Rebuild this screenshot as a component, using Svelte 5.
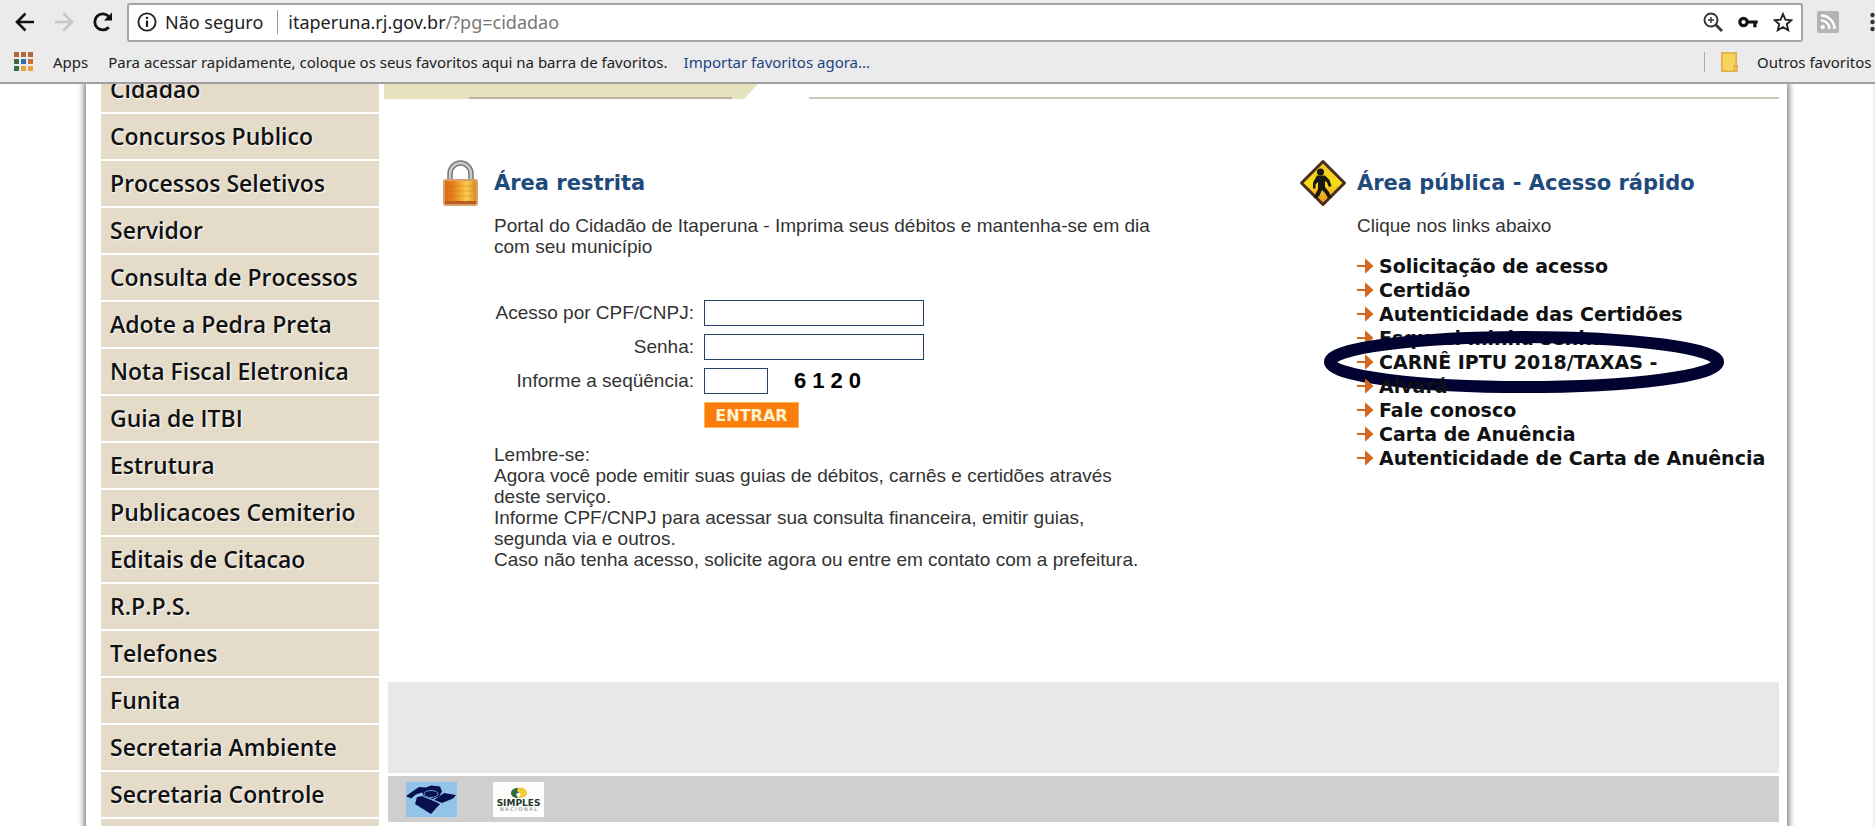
<script>
  // Menu lateral do portal
  const menuItems = [
    'Cidadao',
    'Concursos Publico',
    'Processos Seletivos',
    'Servidor',
    'Consulta de Processos',
    'Adote a Pedra Preta',
    'Nota Fiscal Eletronica',
    'Guia de ITBI',
    'Estrutura',
    'Publicacoes Cemiterio',
    'Editais de Citacao',
    'R.P.P.S.',
    'Telefones',
    'Funita',
    'Secretaria Ambiente',
    'Secretaria Controle',
  ];

  const quickLinks = [
    { label: 'Solicitação de acesso' },
    { label: 'Certidão' },
    { label: 'Autenticidade das Certidões' },
    { label: 'Esqueci minha senha' },
    { label: 'CARNÊ IPTU 2018/TAXAS -', marked: true },
    { label: 'Alvará' },
    { label: 'Fale conosco' },
    { label: 'Carta de Anuência' },
    { label: 'Autenticidade de Carta de Anuência' },
  ];

  // Cores da grelha do ícone "Apps"
  const appDots = [
    '#b5653a', '#b5653a', '#b5653a',
    '#3d6b45', '#2f6fb5', '#c9733a',
    '#3d6b45', '#e5a33c', '#e5a33c',
  ];

  let url = $state('itaperuna.rj.gov.br/?pg=cidadao');
  let cpf = $state('');
  let senha = $state('');
  let sequencia = $state('');
</script>

<div class="window">
  <header class="chrome">
    <div class="toolbar">
      <button class="nav-btn" aria-label="Voltar">
        <svg width="20" height="20" viewBox="0 0 20 20" fill="none" stroke="#111" stroke-width="2.6"><path d="M19 10H3M10.5 1.500L2 10l8.500 8.500" /></svg>
      </button>
      <button class="nav-btn" aria-label="Avançar">
        <svg width="20" height="20" viewBox="0 0 20 20" fill="none" stroke="#c6c6c6" stroke-width="2.6"><path d="M1 10h16M9.500 1.500L18 10l-8.500 8.500" /></svg>
      </button>
      <button class="nav-btn" aria-label="Recarregar">
        <svg width="20" height="20" viewBox="0 0 20 20"><path d="M15.800 15.200A8 8 0 1 1 15.500 4.300" fill="none" stroke="#111" stroke-width="2.8" /><path d="M19 .5v8h-8z" fill="#111" /></svg>
      </button>

      <div class="address">
        <svg width="20" height="20" viewBox="0 0 20 20"><circle cx="10" cy="10" r="8.600" fill="none" stroke="#222" stroke-width="1.9" /><path d="M10 8.600V15M10 4.800v2.200" stroke="#222" stroke-width="2.2" /></svg>
        <span class="insecure">Não seguro</span>
        <span class="url">
          <span class="host" aria-hidden="true">itaperuna.rj.gov.br</span><span class="path" aria-hidden="true">/?pg=cidadao</span>
          <input class="url-input" aria-label="Endereço" bind:value={url} />
        </span>
        <span class="address-icons">
          <button class="icon-btn" aria-label="Zoom">
            <svg width="20" height="20" viewBox="0 0 20 20" fill="none" stroke="#333" stroke-width="1.9"><circle cx="8" cy="8" r="6.500" /><path d="M5 8h6M8 5v6" stroke-width="1.4" /><path d="M12.800 12.800L19 19" stroke-width="2.8" /></svg>
          </button>
          <button class="icon-btn" aria-label="Senhas">
            <svg width="20" height="20" viewBox="0 0 20 20"><circle cx="5.500" cy="10" r="3.700" fill="none" stroke="#111" stroke-width="3.2" /><path d="M9.500 8.400h10.200v3.200h-1.200v3.700h-3.200v-3.700H9.500z" fill="#111" /></svg>
          </button>
          <button class="icon-btn" aria-label="Favorito">
            <svg width="20" height="20" viewBox="0 0 20 20" fill="none" stroke="#222" stroke-width="1.9"><path d="M10 2l2.400 5.700 6 .5-4.600 4 1.400 6L10 15l-5.200 3.200 1.400-6-4.600-4 6-.5z" /></svg>
          </button>
        </span>
      </div>

      <button class="icon-btn feed" aria-label="Feed RSS">
        <svg width="22" height="22" viewBox="0 0 22 22"><rect width="22" height="22" rx="2" fill="#b4b4b4" /><circle cx="5.800" cy="16.200" r="2.100" fill="#fff" /><path d="M4 9.500a8.500 8.500 0 0 1 8.500 8.500M4 4.500A13.500 13.500 0 0 1 17.500 18" fill="none" stroke="#fff" stroke-width="2.5" /></svg>
      </button>
      <button class="icon-btn more" aria-label="Menu">
        <svg width="5" height="20" viewBox="0 0 5 20" fill="#333"><circle cx="2.500" cy="3" r="2.200" /><circle cx="2.500" cy="10" r="2.200" /><circle cx="2.500" cy="17" r="2.200" /></svg>
      </button>
    </div>

    <nav class="bookmarks" aria-label="Barra de favoritos">
      <a class="apps" href="#apps">
        <span class="apps-grid" aria-hidden="true">
          {#each appDots as color}
            <i style="background: {color}"></i>
          {/each}
        </span>
        Apps
      </a>
      <span class="hint">Para acessar rapidamente, coloque os seus favoritos aqui na barra de favoritos.</span>
      <a class="import" href="#importar">Importar favoritos agora...</a>
      <a class="others" href="#outros">
        <svg width="17" height="20" viewBox="0 0 17 20"><path d="M.8.800h14.400v13h1v5.400H.8z" fill="#f7d35c" stroke="#e0a03c" stroke-width="1.3" /><path d="M13.500 19v-5h2.500" fill="none" stroke="#e0a03c" stroke-width="1.3" /></svg>
        Outros favoritos
      </a>
    </nav>
  </header>

  <div class="viewport">
    <div class="sheet">
      <ul class="menu">
        {#each menuItems as item}
          <li><a href="#menu">{item}</a></li>
        {/each}
        <li class="menu-end"></li>
      </ul>

      <main class="main">
        <div class="tabs">
          <div class="tab"></div>
          <div class="tab-rule"></div>
        </div>

        <div class="areas">
          <section class="area">
            <svg class="lock" width="37" height="48" viewBox="0 0 37 48">
              <defs>
                <linearGradient id="gold" x1="0" x2="1">
                  <stop offset="0" stop-color="#d8701c" />
                  <stop offset=".25" stop-color="#e87d17" />
                  <stop offset=".7" stop-color="#f8cf4c" />
                  <stop offset="1" stop-color="#d98a2a" />
                </linearGradient>
              </defs>
              <path d="M8 23V15a10.500 11 0 0 1 21 0v8" fill="none" stroke="#777" stroke-width="5.5" />
              <path d="M8 23V15a10.500 11 0 0 1 21 0v8" fill="none" stroke="#c9c9c9" stroke-width="2.5" />
              <rect x="1" y="20" width="35" height="27" rx="3" fill="#d9a06a" />
              <rect x="3" y="22" width="31" height="23" rx="1" fill="url(#gold)" />
              <path d="M4 27h29M4 32h29M4 37h29" stroke="#d96a12" stroke-width="1" opacity=".35" />
              <path d="M3 43.500h31" stroke="#b85a24" stroke-width="3" />
            </svg>
            <div class="area-body">
              <h2>Área restrita</h2>
              <p class="intro">Portal do Cidadão de Itaperuna - Imprima seus débitos e mantenha-se em dia com seu município</p>

              <form class="login" onsubmit={(e) => e.preventDefault()}>
                <label for="cpf">Acesso por CPF/CNPJ:</label>
                <input id="cpf" type="text" bind:value={cpf} />

                <label for="senha">Senha:</label>
                <input id="senha" type="password" bind:value={senha} />

                <label for="sequencia">Informe a seqüência:</label>
                <div class="captcha">
                  <input id="sequencia" class="short" type="text" bind:value={sequencia} />
                  <span class="digits"><b>6</b><b>1</b><b>2</b><b>0</b></span>
                </div>

                <button class="enter" type="submit">ENTRAR</button>
              </form>

              <p class="reminder">
                Lembre-se:<br />
                Agora você pode emitir suas guias de débitos, carnês e certidões através deste serviço.<br />
                Informe CPF/CNPJ para acessar sua consulta financeira, emitir guias, segunda via e outros.<br />
                Caso não tenha acesso, solicite agora ou entre em contato com a prefeitura.
              </p>
            </div>
          </section>

          <section class="area">
            <svg class="sign" width="48" height="48" viewBox="0 0 48 48">
              <defs>
                <linearGradient id="sign" x1="0" y1="0" x2="0" y2="1">
                  <stop offset="0" stop-color="#f0c22a" />
                  <stop offset=".5" stop-color="#f6df1a" />
                  <stop offset="1" stop-color="#ee8f22" />
                </linearGradient>
              </defs>
              <path d="M24 2.500L45.500 24 24 45.500 2.500 24z" fill="url(#sign)" stroke="#4a2d20" stroke-width="3" stroke-linejoin="round" />
              <circle cx="21.500" cy="13" r="3.500" fill="#1b1712" />
              <path d="M18 16.500h8l4.500 4.500 2 6-2.500 1-2-4.500-2-1.500v6l4 5 3 6h-4l-3-5-3-3-2.500 5.500-2.500 2.500h-3.500l4.500-9V23l-2.500 2.500v4h-2.500v-6z" fill="#1b1712" />
            </svg>
            <div class="area-body">
              <h2>Área pública - Acesso rápido</h2>
              <p class="intro">Clique nos links abaixo</p>
              <ul class="links">
                {#each quickLinks as link}
                  <li>
                    <svg width="17" height="16" viewBox="0 0 17 16"><path d="M0 7h8V.5l2 1.500 6.500 6L10 14l-2 1.500V9H0z" fill="#d2691e" /></svg>
                    <a href="#acesso">{link.label}</a>
                    {#if link.marked}
                      <svg class="marker" width="400" height="62" viewBox="0 0 400 62" aria-hidden="true"><ellipse cx="200" cy="31" rx="194" ry="25" fill="none" stroke="#020230" stroke-width="12" /></svg>
                    {/if}
                  </li>
                {/each}
              </ul>
            </div>
          </section>
        </div>

        <div class="banner"></div>
        <footer class="partners">
          <a href="#receita" aria-label="Receita Federal">
            <svg width="51" height="35" viewBox="0 0 51 35">
              <rect width="51" height="35" fill="#93c3e8" />
              <path d="M0 14L13 5l7 .5 5-2 9 1 2 5-3 5-6 2.500-9-2.500-2-4-6 2-5 4z" fill="#06104f" />
              <path d="M28 18l10-7 12 2-3 3.500L36 21z" fill="#06104f" />
              <path d="M11 15l6-1 17 8-9 10L9 22z" fill="#06104f" />
              <ellipse cx="25" cy="12" rx="7" ry="3.500" fill="#06104f" stroke="#6f9ccc" />
              <path d="M17 14.500l14 5" stroke="#6f9ccc" />
            </svg>
          </a>
          <a href="#simples" aria-label="Simples Nacional">
            <svg width="51" height="35" viewBox="0 0 51 35">
              <rect width="51" height="35" fill="#fdfdfb" />
              <path d="M25 6c-4 0-7 2-7 5s3 5 7 5l-2-4 4-2z" fill="#2f6a3e" />
              <path d="M25 6c5-1 9 1 9 5s-4 5-9 5l3-4-4-3z" fill="#f0cb3a" />
              <text x="25.500" y="24" text-anchor="middle" font-family="DejaVu Sans" font-weight="bold" font-size="9" fill="#1d3a30">SIMPLES</text>
              <text x="25.500" y="29" text-anchor="middle" font-family="DejaVu Sans" font-size="5" fill="#777">N A C I O N A L</text>
            </svg>
          </a>
        </footer>
      </main>
    </div>
  </div>
</div>

<style>
  :global(body) {
    margin: 0;
    background: #fff;
  }

  .window {
    display: flex;
    flex-direction: column;
    height: 100vh;
    overflow: hidden;
    color: #333;
    font-family: "Liberation Sans", Arial, sans-serif;
    font-size: 19px;
  }

  a {
    color: inherit;
    text-decoration: none;
  }

  button {
    padding: 0;
    border: 0;
    background: none;
    cursor: pointer;
  }

  svg {
    display: block;
    flex-shrink: 0;
  }

  /* Barra do navegador */
  .chrome {
    flex-shrink: 0;
    background: #ebebeb;
    border-bottom: 2px solid #a0a0a0;
    color: #222;
    font-family: "Noto Sans", "Segoe UI", sans-serif;
    overflow: hidden;
  }

  .toolbar {
    display: flex;
    align-items: center;
    height: 38px;
    padding: 3px 0 0 15px;
  }

  .nav-btn {
    width: 20px;
    margin-right: 19px;
  }

  .nav-btn:nth-child(3) {
    margin-right: 14px;
  }

  .address {
    display: flex;
    flex: 1;
    align-items: center;
    box-sizing: border-box;
    height: 39px;
    padding: 0 8px;
    background: #fff;
    border: 2px solid #a3a3a3;
    border-radius: 3px;
    font-size: 18px;
  }

  .insecure {
    margin-left: 8px;
    padding-right: 14px;
    border-right: 1px solid #999;
    white-space: nowrap;
  }

  .url {
    position: relative;
    flex: 1;
    margin-left: 10px;
    white-space: nowrap;
  }

  .path { color: #777; }

  /* O texto visível é colorido por partes; o campo fica por cima */
  .url-input {
    position: absolute;
    inset: 0;
    width: 100%;
    padding: 0;
    border: 0;
    background: none;
    color: transparent;
    font: inherit;
  }

  .address-icons {
    display: flex;
    gap: 15px;
  }

  .feed { margin-left: 14px; }

  .more {
    margin-left: 31px;
    width: 5px;
  }

  .bookmarks {
    display: flex;
    align-items: center;
    height: 41px;
    padding-left: 14px;
    font-size: 15px;
    white-space: nowrap;
  }

  .apps {
    display: flex;
    align-items: center;
    gap: 20px;
    margin-right: 20px;
  }

  .apps-grid {
    display: grid;
    grid-template-columns: repeat(3, 5px);
    grid-auto-rows: 5px;
    gap: 2px;
  }

  .import {
    margin-left: 16px;
    color: #1b4382;
  }

  .others {
    display: flex;
    align-items: center;
    gap: 19px;
    width: 154px;
    margin-left: auto;
    padding-left: 16px;
    border-left: 1px solid #aaa;
  }

  /* Página */
  .viewport {
    flex: 1;
    min-height: 0;
    overflow: hidden;
    border-right: 2px solid #eee;
  }

  .sheet {
    display: flex;
    gap: 5px;
    margin: 0 86px;
    padding: 0 8px 0 15px;
    background: #fff;
    box-shadow: 0 0 6px 2px #777;
  }

  /* A página está rolada, o primeiro item fica cortado */
  .menu {
    flex: 0 0 278px;
    margin: -17px 0 0;
    padding: 0;
    list-style: none;
    font-family: "Trebuchet MS", "Open Sans", sans-serif;
    font-size: 23px;
    font-weight: 600;
    color: #111;
    text-shadow: 1px 1px 2px #fff;
  }

  .menu a {
    display: block;
    height: 45px;
    margin-bottom: 2px;
    padding-left: 9px;
    line-height: 45px;
    background: #e4dbc8;
  }

  .menu-end {
    height: 45px;
    background: #e4dbc8;
  }

  .main {
    flex: 1;
    min-width: 0;
  }

  .tabs {
    display: flex;
    gap: 51px;
    height: 15px;
  }

  .tab {
    width: 374px;
    background: linear-gradient(#b9b49a, #b9b49a) 85px 13px / 263px 2px no-repeat #e3e2bd;
    clip-path: polygon(0 0, 100% 0, 360px 100%, 0 100%);
  }

  .tab-rule {
    flex: 1;
    border-bottom: 2px solid #cbc8b9;
  }

  .areas {
    display: grid;
    grid-template-columns: 1fr 480px;
    padding: 60px 0 112px 58px;
  }

  .area {
    display: flex;
    align-items: flex-start;
  }

  .lock { margin-right: 15px; }

  .sign { margin-right: 10px; }

  .area-body { flex: 1; }

  h2 {
    margin: 12px 0 20px;
    color: #1f4a7c;
    font-family: Verdana, "DejaVu Sans", sans-serif;
    font-size: 21px;
    font-weight: bold;
    line-height: 24px;
    white-space: nowrap;
  }

  .intro,
  .reminder {
    max-width: 664px;
    margin: 0;
    line-height: 21px;
  }

  .login {
    display: grid;
    grid-template-columns: 200px 220px;
    column-gap: 10px;
    row-gap: 8px;
    margin: 43px 0 16px;
    align-items: center;
  }

  .login label { text-align: right; }

  .login input {
    box-sizing: border-box;
    width: 100%;
    height: 26px;
    border: 1px solid #23426b;
    background: #fff;
    font: inherit;
  }

  .captcha {
    display: flex;
    align-items: center;
    gap: 26px;
  }

  .login .short { width: 64px; }

  .digits {
    display: flex;
    gap: 6px;
    color: #000;
    font-size: 22px;
    line-height: 24px;
  }

  .enter {
    grid-column: 2;
    justify-self: start;
    width: 95px;
    height: 26px;
    background: #fb7d0c;
    border: 1px solid #fbb45a;
    color: #fff3d0;
    font-family: Verdana, "DejaVu Sans", sans-serif;
    font-size: 16px;
    font-weight: bold;
  }

  .links {
    margin: 18px 0 0;
    padding: 0;
    list-style: none;
    color: #111;
    font-family: Verdana, "DejaVu Sans", sans-serif;
    font-size: 19px;
    font-weight: bold;
    line-height: 24px;
    white-space: nowrap;
  }

  .links li {
    position: relative;
    display: flex;
    align-items: center;
    gap: 5px;
    height: 24px;
  }

  .marker {
    position: absolute;
    left: -33px;
    top: -19px;
    pointer-events: none;
  }

  /* Rodapé */
  .banner {
    height: 91px;
    margin: 0 0 3px 4px;
    background: #e8e8e8;
  }

  .partners {
    display: flex;
    gap: 36px;
    margin-left: 4px;
    padding: 6px 18px 5px;
    background: #cfcfcf;
  }
</style>
